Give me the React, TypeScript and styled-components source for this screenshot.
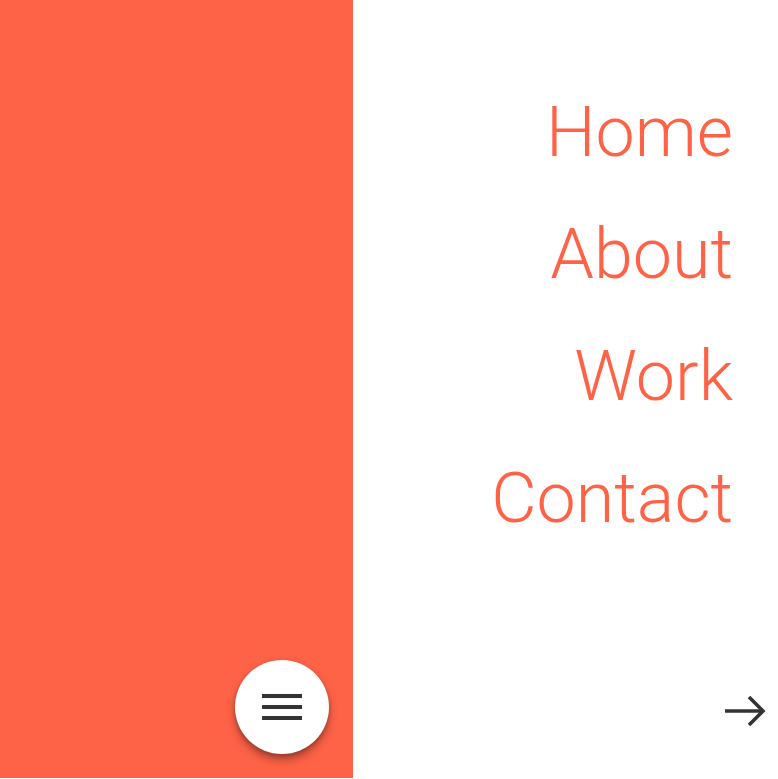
import React from "react";
import styled, { createGlobalStyle } from "styled-components";

const Global = createGlobalStyle`
  html, body { margin: 0; padding: 0; height: 100%; }
  body { font-family: Roboto, "Liberation Sans", sans-serif; background: #fff; }
  #root { height: 100%; }
`;

const Page = styled.div`
  display: flex;
  height: 778px;
  overflow: hidden;
`;

const Panel = styled.aside`
  position: relative;
  width: 353px;
  flex: none;
  background: #ff6347;
`;

const Fab = styled.button`
  position: absolute;
  right: 24px;
  bottom: 24px;
  width: 94px;
  height: 94px;
  border-radius: 50%;
  border: none;
  background: #fff;
  box-shadow: 0 6px 10px rgba(0, 0, 0, 0.3), 0 2px 4px rgba(0, 0, 0, 0.2);
  display: flex;
  align-items: center;
  justify-content: center;
  padding: 0;
  cursor: pointer;
`;

const Main = styled.main`
  position: relative;
  flex: 1;
  display: flex;
  flex-direction: column;
  align-items: flex-end;
  padding: 71px 45px 0 0;
`;

const NavLink = styled.a`
  font-family: Roboto, "Liberation Sans", sans-serif;
  font-weight: 300;
  font-size: 70px;
  line-height: 122px;
  color: #ff6347;
  text-decoration: none;
`;

const Next = styled.div`
  position: absolute;
  right: 12px;
  bottom: 51px;
  width: 42px;
  height: 32px;
`;

export default function App() {
  return (
    <>
      <Global />
      <Page>
        <Panel>
          <Fab aria-label="menu">
            <svg width="40" height="26" viewBox="0 0 40 26">
              <rect x="0" y="0" width="40" height="4" fill="#333" />
              <rect x="0" y="11" width="40" height="4" fill="#333" />
              <rect x="0" y="22" width="40" height="4" fill="#333" />
            </svg>
          </Fab>
        </Panel>
        <Main>
          <NavLink href="#">Home</NavLink>
          <NavLink href="#">About</NavLink>
          <NavLink href="#">Work</NavLink>
          <NavLink href="#">Contact</NavLink>
          <Next>
            <svg width="42" height="32" viewBox="0 0 42 32" fill="none" stroke="#333" strokeWidth="3.6">
              <path d="M1 16 H39" />
              <path d="M25 2 L39 16 L25 30" />
            </svg>
          </Next>
        </Main>
      </Page>
    </>
  );
}
